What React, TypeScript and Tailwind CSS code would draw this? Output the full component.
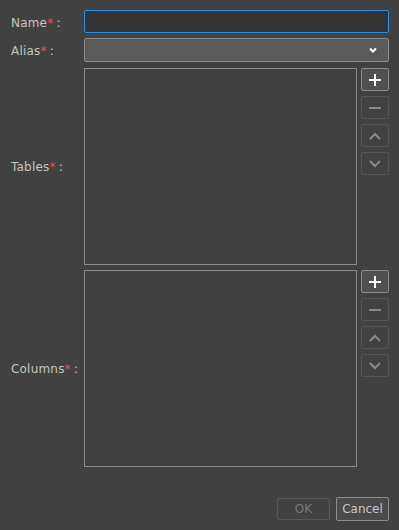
const Label = ({ text }: { text: string }) => (
  <span className="text-[12px] text-[#c4c4c4] whitespace-nowrap tracking-[0.2px]">
    {text}
    <span className="text-[#e0554f]">*</span>
    <span className="ml-[3px]">:</span>
  </span>
);

const SideButtons = () => (
  <div className="flex flex-col gap-[5px]">
    <button className="w-[28px] h-[23px] flex items-center justify-center border border-[#8c8c8c] bg-[#505050] rounded-[2px]">
      <svg width="12" height="12" viewBox="0 0 12 12">
        <path d="M6 0v12M0 6h12" stroke="#ffffff" strokeWidth="2" />
      </svg>
    </button>
    <button className="w-[28px] h-[23px] flex items-center justify-center border border-[#555555] rounded-[2px]">
      <svg width="12" height="12" viewBox="0 0 12 12">
        <path d="M0 6h12" stroke="#8a8a8a" strokeWidth="2" />
      </svg>
    </button>
    <button className="w-[28px] h-[23px] flex items-center justify-center border border-[#555555] rounded-[2px]">
      <svg width="12" height="12" viewBox="0 0 12 12">
        <path d="M1 9l5-5 5 5" stroke="#8a8a8a" strokeWidth="2" fill="none" />
      </svg>
    </button>
    <button className="w-[28px] h-[23px] flex items-center justify-center border border-[#555555] rounded-[2px]">
      <svg width="12" height="12" viewBox="0 0 12 12">
        <path d="M1 3l5 5 5-5" stroke="#8a8a8a" strokeWidth="2" fill="none" />
      </svg>
    </button>
  </div>
);

const ListRow = ({ label }: { label: string }) => (
  <div className="flex h-[197px]">
    <div className="w-[73px] flex items-center">
      <Label text={label} />
    </div>
    <div className="flex-1 border border-[#8c8c8c] bg-[#414141]" />
    <div className="ml-[4px]">
      <SideButtons />
    </div>
  </div>
);

export default function App() {
  return (
    <div
      className="w-[399px] h-[530px] bg-[#414141] flex flex-col pl-[11px] pr-[10px] pt-[10px] pb-[9px]"
      style={{ fontFamily: '"DejaVu Sans", sans-serif' }}
    >
      <div className="flex items-center h-[23px]">
        <div className="w-[73px]">
          <Label text="Name" />
        </div>
        <input className="flex-1 h-[23px] bg-[#333333] border border-[#2d8fdf] rounded-[2px] outline-none" />
      </div>
      <div className="flex items-center h-[24px] mt-[5px]">
        <div className="w-[73px]">
          <Label text="Alias" />
        </div>
        <div className="flex-1 h-[24px] bg-[#5a5a5a] border border-[#8c8c8c] rounded-[2px] flex items-center justify-end pr-[11px]">
          <svg width="8" height="6" viewBox="0 0 8 6">
            <path d="M1 1.5l3 3 3-3" stroke="#ffffff" strokeWidth="2" fill="none" />
          </svg>
        </div>
      </div>
      <div className="mt-[6px]">
        <ListRow label="Tables" />
      </div>
      <div className="mt-[5px]">
        <ListRow label="Columns" />
      </div>
      <div className="flex-1" />
      <div className="flex justify-end gap-[6px] items-center">
        <button className="w-[53px] h-[22px] border border-[#585858] rounded-[2px] text-[12px] text-[#777777]">
          OK
        </button>
        <button className="w-[53px] h-[24px] border border-[#8c8c8c] bg-[#4a4a4a] rounded-[2px] text-[12px] text-[#c8c8c8]">
          Cancel
        </button>
      </div>
    </div>
  );
}
